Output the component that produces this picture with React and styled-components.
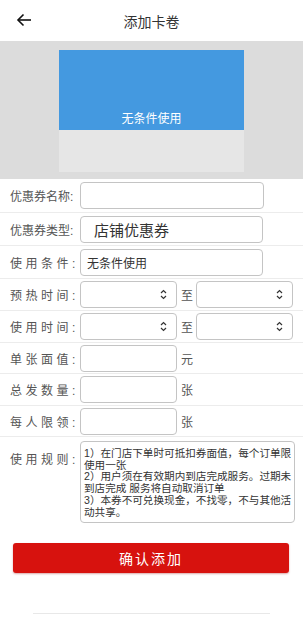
import React from 'react';
import styled, { createGlobalStyle } from 'styled-components';

const GlobalStyle = createGlobalStyle`
  html, body {
    margin: 0;
    padding: 0;
    background: #fff;
    font-family: "Liberation Sans", "Noto Sans CJK SC", sans-serif;
  }
  * { box-sizing: border-box; }
`;

const Page = styled.div`
  width: 303px;
  height: 617px;
  overflow: hidden;
  background: #fff;
  color: #333;
`;

const Header = styled.div`
  height: 41px;
  display: flex;
  align-items: center;
  justify-content: center;
  position: relative;
  font-size: 14px;
  color: #333;
`;

const BackButton = styled.div`
  position: absolute;
  left: 16px;
  top: 13px;
  display: flex;
`;

const Preview = styled.div`
  background: #dcdcdc;
  height: 138px;
  padding-top: 9px;
  display: flex;
  justify-content: center;
`;

const Card = styled.div`
  width: 185px;
  height: 122px;
  display: flex;
  flex-direction: column;
`;

const CardTop = styled.div`
  height: 80px;
  background: #4499e0;
  color: #fff;
  font-size: 12px;
  display: flex;
  align-items: flex-end;
  justify-content: center;
  padding-bottom: 4px;
`;

const CardBottom = styled.div`
  flex: 1;
  background: #e6e6e6;
`;

const Row = styled.div`
  height: ${p => p.$h || 32}px;
  border-bottom: ${p => (p.$plain ? 'none' : '1px solid #ececec')};
  display: flex;
  align-items: ${p => (p.$top ? 'flex-start' : 'center')};
  padding-left: 10px;
  padding-top: ${p => (p.$top ? '4px' : '0')};
`;

const Label = styled.div`
  width: 70px;
  flex-shrink: 0;
  font-size: 12px;
  color: #555;
  letter-spacing: ${p => p.$spacing || 0}px;
  white-space: nowrap;
  padding-top: ${p => (p.$top ? '9px' : '0')};
`;

const Field = styled.div`
  width: ${p => p.$w}px;
  height: 27px;
  border: 1px solid #c4c4c4;
  border-radius: 4px;
  background: #fff;
  display: flex;
  align-items: center;
  justify-content: space-between;
  padding: 0 ${p => p.$pad || 6}px;
  font-size: ${p => p.$fs || 12}px;
  color: #333;
`;

const Unit = styled.span`
  font-size: 12px;
  color: #555;
  margin: 0 ${p => p.$mr || 0}px 0 4px;
`;

const RulesBox = styled.div`
  width: 215px;
  height: 82px;
  border: 1px solid #c4c4c4;
  border-radius: 4px;
  padding: 6px 3px 0 3px;
  font-size: 10.6px;
  line-height: 11.7px;
  color: #333;
  overflow: hidden;
`;

const RuleLine = styled.div`
  white-space: nowrap;
`;

const ButtonWrap = styled.div`
  padding: 14px 14px 0 13px;
`;

const SubmitButton = styled.div`
  height: 30px;
  border-radius: 3px;
  background: #d7120e;
  box-shadow: 0 1px 2px rgba(150, 0, 0, 0.35);
  color: #fff;
  font-size: 14px;
  letter-spacing: 2px;
  display: flex;
  align-items: center;
  justify-content: center;
`;

const BottomBar = styled.div`
  margin: 40px 33px 0 33px;
  border-top: 1px solid #e8e8e8;
  height: 4px;
`;

const rules = [
  '1）在门店下单时可抵扣券面值，每个订单限',
  '使用一张',
  '2）用户须在有效期内到店完成服务。过期未',
  '到店完成 服务将自动取消订单',
  '3）本券不可兑换现金，不找零，不与其他活',
  '动共享。',
];

const Arrows = () => (
  <svg width="7" height="11" viewBox="0 0 7 11" fill="none" stroke="#333" strokeWidth="1.2">
    <path d="M1 4 L3.5 1.5 L6 4" />
    <path d="M1 7 L3.5 9.5 L6 7" />
  </svg>
);

const SelectPair = () => (
  <>
    <Field $w={97} $pad={9}>
      <span />
      <Arrows />
    </Field>
    <Unit $mr={3}>至</Unit>
    <Field $w={97} $pad={9}>
      <span />
      <Arrows />
    </Field>
  </>
);

export default function App() {
  return (
    <Page>
      <GlobalStyle />
      <Header>
        <BackButton>
          <svg width="16" height="14" viewBox="0 0 16 14" fill="none" stroke="#111" strokeWidth="1.6">
            <path d="M15 7 H2" />
            <path d="M7.5 1.5 L2 7 L7.5 12.5" />
          </svg>
        </BackButton>
        添加卡卷
      </Header>
      <Preview>
        <Card>
          <CardTop>无条件使用</CardTop>
          <CardBottom />
        </Card>
      </Preview>
      <Row $h={34}>
        <Label>优惠券名称:</Label>
        <Field $w={184} />
      </Row>
      <Row $h={33}>
        <Label>优惠券类型:</Label>
        <Field $w={183} $fs={15} $pad={13}>店铺优惠券</Field>
      </Row>
      <Row $h={33}>
        <Label $spacing={3.5}>使用条件:</Label>
        <Field $w={183}>无条件使用</Field>
      </Row>
      <Row $h={32}>
        <Label $spacing={3.5}>预热时间:</Label>
        <SelectPair />
      </Row>
      <Row $h={32}>
        <Label $spacing={3.5}>使用时间:</Label>
        <SelectPair />
      </Row>
      <Row $h={31}>
        <Label $spacing={3.5}>单张面值:</Label>
        <Field $w={97} />
        <Unit>元</Unit>
      </Row>
      <Row $h={32}>
        <Label $spacing={3.5}>总发数量:</Label>
        <Field $w={97} />
        <Unit>张</Unit>
      </Row>
      <Row $h={31}>
        <Label $spacing={3.5}>每人限领:</Label>
        <Field $w={97} />
        <Unit>张</Unit>
      </Row>
      <Row $h={92} $top $plain>
        <Label $spacing={3.5} $top>使用规则:</Label>
        <RulesBox>
          {rules.map(line => (
            <RuleLine key={line}>{line}</RuleLine>
          ))}
        </RulesBox>
      </Row>
      <ButtonWrap>
        <SubmitButton>确认添加</SubmitButton>
      </ButtonWrap>
      <BottomBar />
    </Page>
  );
}
